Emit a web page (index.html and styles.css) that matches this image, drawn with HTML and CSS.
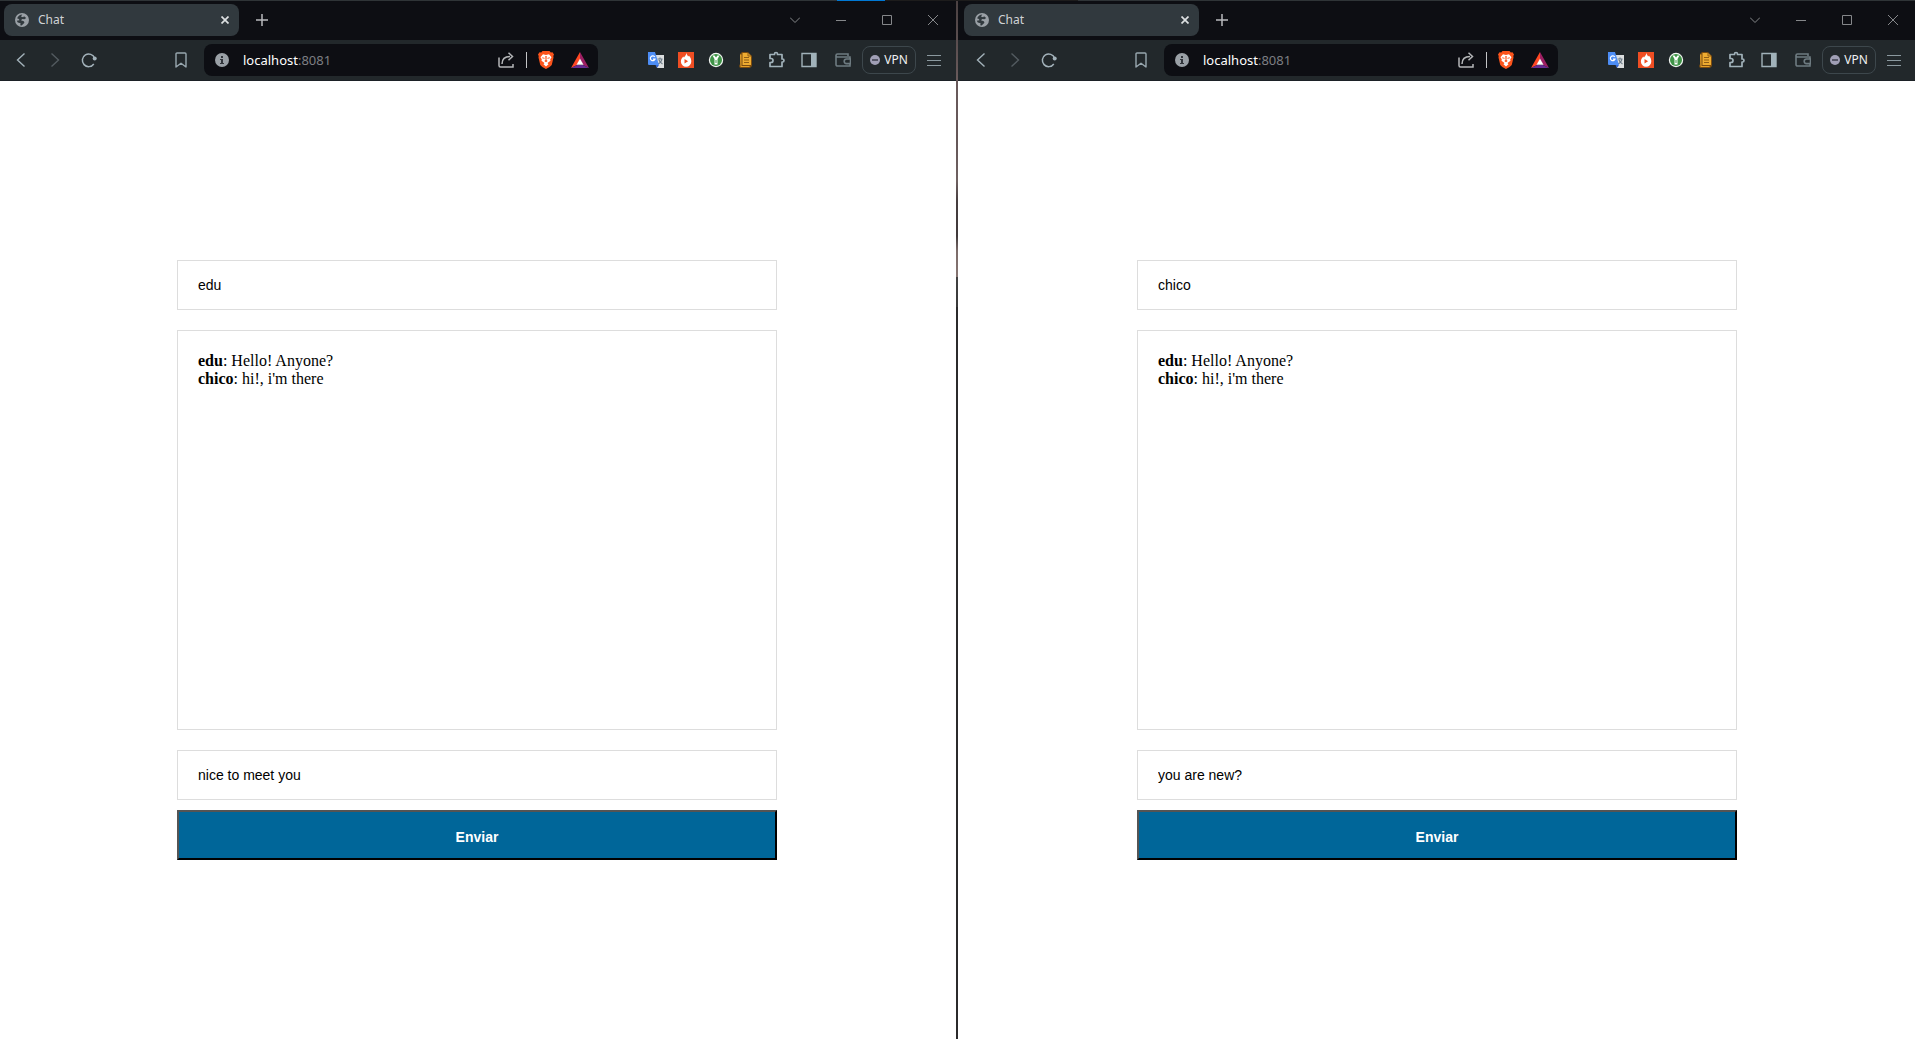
FILE: index.html
```html
<!DOCTYPE html>
<html lang="en">
<head>
<meta charset="utf-8">
<meta name="viewport" content="width=device-width, initial-scale=1">
<title>Chat</title>
<link rel="stylesheet" href="styles.css">
</head>
<body>
<svg class="sprite" aria-hidden="true">
  <symbol id="globe" viewBox="2 2 20 20"><path d="M12 2C6.480 2 2 6.480 2 12s4.480 10 10 10 10-4.480 10-10S17.520 2 12 2zm-1 17.930c-3.950-.49-7-3.850-7-7.930 0-.62.08-1.210.21-1.790L9 15v1c0 1.100.9 2 2 2v1.930zm6.900-2.540c-.26-.81-1-1.390-1.900-1.390h-1v-3c0-.55-.45-1-1-1H8v-2h2c.55 0 1-.45 1-1V7h2c1.100 0 2-.9 2-2v-.41c2.930 1.190 5 4.060 5 7.410 0 2.080-.8 3.970-2.100 5.390z" fill="#31393e"/><path d="M12 2a10 10 0 1 0 0 20 10 10 0 0 0 0-20zM5 9.500C6.500 6.500 9 4.500 12.500 4.300L10.500 7l3 1.200 1.500-1.500 3 2.300-2.500 2-3-.3-2 1.500 4 1.600c1.500 1.200 1 2.800-.5 3.500l-2.500 2.700-2-.5.500-3-4-1-1.500-2.500 4-.5-1-2z" fill="#9aa0a6" fill-rule="evenodd"/></symbol>
  <symbol id="tab-close" viewBox="0 0 8 8"><path d="M.5.5l7 7M7.500.5l-7 7" stroke="#dde0e2" stroke-width="1.700"/></symbol>
  <symbol id="plus" viewBox="0 0 12 12"><path d="M6 0v12M0 6h12" stroke="#b9bbbe" stroke-width="1.500"/></symbol>
  <symbol id="chevron" viewBox="0 0 10 10"><path d="M0 2.500l5 5 5-5" fill="none" stroke="#85878a"/></symbol>
  <symbol id="minimize" viewBox="0 0 10 10"><path d="M0 5.500h10" stroke="#85878a"/></symbol>
  <symbol id="maximize" viewBox="0 0 10 10"><path d="M.5.5h9v9h-9z" fill="none" stroke="#85878a"/></symbol>
  <symbol id="close" viewBox="0 0 10 10"><path d="M0 0l10 10M10 0L0 10" stroke="#85878a"/></symbol>
  <symbol id="back" viewBox="0 0 16 16"><path d="M11.500 1.500L4.500 8l7 6.500" fill="none" stroke="#a3b2ba" stroke-width="1.400"/></symbol>
  <symbol id="forward" viewBox="0 0 16 16"><path d="M4.500 1.500l7 6.500-7 6.500" fill="none" stroke="#535b60" stroke-width="1.400"/></symbol>
  <symbol id="reload" viewBox="0 0 16 16"><path d="M13.600 6.200A6.300 6.300 0 1 0 12.800 12" fill="none" stroke="#a3b2ba" stroke-width="1.500"/><circle cx="13.700" cy="6.500" r="2" fill="#a3b2ba"/></symbol>
  <symbol id="bookmark" viewBox="0 0 16 16"><path d="M3 2a1 1 0 0 1 1-1h8a1 1 0 0 1 1 1v13l-5-3.800L3 15z" fill="none" stroke="#98a7af" stroke-width="1.400" stroke-linejoin="round"/></symbol>
  <symbol id="info" viewBox="0 0 14 14"><circle cx="7" cy="7" r="7" fill="#9aa0a6"/><path d="M6 3h2v2H6zM5 6h3v4h1v1H5v-1h1V7H5z" fill="#30343a"/></symbol>
  <symbol id="share" viewBox="0 0 16 16"><path d="M1 5.500v8a1.500 1.500 0 0 0 1.500 1.500h12.500v-3M4 12c0-5.500 3-7.500 8-7.500M10.500.800l4 3.700-4 3.700" fill="none" stroke="#b5b7b9" stroke-width="1.500"/></symbol>
  <symbol id="lion" viewBox="0 0 16 18"><path d="M4.500 0h7l1.300 1.500 1.700-.2 1.500 2.200-.7 1.500.2 1.500-1.700 7.300c-.3 1-4.600 4-5.800 4.200-1.200-.2-5.500-3.200-5.800-4.200L.5 6.500.7 5 0 3.500l1.500-2.200 1.700.2z" fill="#fb541c"/><path d="M5 3.300l3 .6 3-.6 2.500 3-1.300 2 .3 1.400-3 2.300 1 1.200L8 15.500l-2.500-2.300 1-1.200-3-2.300.3-1.400-1.300-2z" fill="#fff"/><path d="M4.200 6.200l2.600.8-.5.700-2-.4zM11.800 6.200l-2.600.8.500.7 2-.4zM7.300 5h1.400l-.2 4 1.200 1L8 11.200 6.300 10l1.200-1z" fill="#fb541c"/></symbol>
  <symbol id="triangle" viewBox="0 0 18 16"><path d="M9 0L0 16l6-3 3-6z" fill="#ff4724"/><path d="M9 0l9 16-6-3-3-6z" fill="#9e1f63"/><path d="M0 16h18l-6-3H6z" fill="#662d91"/><path d="M9 6.500l3.500 6.200h-7z" fill="#fff"/></symbol>
  <symbol id="translate" viewBox="0 0 16 16"><path d="M7 3h9v13H9z" fill="#dcdedf"/><path d="M9.500 7h5M12 5.500V7m2 0c-.5 2.500-2 4-4 5m1-4c.6 1.700 2 3 3.500 4" fill="none" stroke="#6b7a86" stroke-width="1.100"/><path d="M0 0h7l4 13H1a1 1 0 0 1-1-1z" fill="#4d8df5"/><path d="M7.500 13H11l-2 3z" fill="#3367d6"/><path d="M6.800 5A2.400 2.400 0 1 0 7 7.200H5" fill="none" stroke="#fff" stroke-width="1.200"/></symbol>
  <symbol id="flame" viewBox="0 0 16 16"><path d="M0 0h16v16H0z" fill="#f04e23"/><path d="M8.500.8c.1 1.800 1 2.500 1.500 3.700l1-.8c1.500 1.500 2.300 3.500 2.300 5.800a5.200 5.200 0 0 1-10.400 0c0-2 1-3.500 2.300-5l.8 1C6.800 4.300 8.300 3 8.500.8z" fill="#fff"/><path d="M6.500 7l3.600 2.300-3.600 2.300z" fill="#f04e23"/></symbol>
  <symbol id="key" viewBox="0 0 16 16"><circle cx="8" cy="8" r="7.200" fill="#f3f6f2"/><circle cx="8" cy="8" r="6" fill="#3f9447"/><path d="M4.500 3.500h2L8 5.500l1.500-2h2L9.500 7v5.500h-3V7z" fill="#fff"/><path d="M8 8v3" stroke="#3f9447"/></symbol>
  <symbol id="scroll" viewBox="0 0 16 16"><path d="M4 0h6l4 4v10l-2 2H2l-1-2 1-2V2z" fill="#7b4c10"/><path d="M4.500 1H10l3 3v9H4.500z" fill="#efac31"/><path d="M2 2.500h1.500V14H12l-.8 1H2.500z" fill="#e5a028"/><path d="M10 1v3h3M6 5.500h5M6 8h5M6 10.500h5" fill="none" stroke="#8f5e18"/></symbol>
  <symbol id="puzzle" viewBox="0 0 18 18"><path d="M2 3.500h4.500V3a1.500 1.500 0 0 1 3 0v.5H14V8h.5a1.500 1.500 0 0 1 0 3H14v4.500H2v-4h1a2 2 0 0 0 0-4H2z" fill="none" stroke="#a1b2ba" stroke-width="1.700" stroke-linejoin="round"/></symbol>
  <symbol id="panel" viewBox="0 0 16 16"><path d="M1 1.500h14v13H1z" fill="none" stroke="#a1b2ba" stroke-width="1.400"/><path d="M10 1.500h5v13h-5z" fill="#a1b2ba"/></symbol>
  <symbol id="wallet" viewBox="0 0 16 16"><path d="M13 4V2H2.500a1.500 1.500 0 0 0 0 3H15v2M1 3v9.500A1.500 1.500 0 0 0 2.500 14H15v-2.500M15.500 7h-4a2.300 2.300 0 0 0 0 4.600h4z" fill="none" stroke="#6e7b81" stroke-width="1.600"/></symbol>
  <symbol id="vpn-dot" viewBox="0 0 10 10"><circle cx="5" cy="5" r="5" fill="#a09fb5"/><path d="M2 5h6" stroke="#353744" stroke-width="1.400"/></symbol>
  <symbol id="menu" viewBox="0 0 14 12"><path d="M0 1.500h14M0 6.500h14M0 11.500h14" stroke="#8b999f"/></symbol>
</svg>

<div class="screen-edge"><span class="edge-a"></span><span class="edge-b"></span><span class="edge-c"></span><span class="edge-a"></span></div>
<div class="desktop">
  <section class="window window-left">
    <header class="titlebar">
      <div class="tab"><svg class="i14"><use href="#globe"/></svg><span class="tab-title">Chat</span><button class="tab-close" aria-label="Close tab"><svg class="i8"><use href="#tab-close"/></svg></button></div>
      <button class="new-tab" aria-label="New tab"><svg class="i12"><use href="#plus"/></svg></button>
      <div class="controls">
        <button aria-label="Search tabs"><svg class="i10"><use href="#chevron"/></svg></button>
        <button aria-label="Minimize"><svg class="i10"><use href="#minimize"/></svg></button>
        <button aria-label="Maximize"><svg class="i10"><use href="#maximize"/></svg></button>
        <button aria-label="Close"><svg class="i10"><use href="#close"/></svg></button>
      </div>
    </header>
    <nav class="toolbar">
      <button class="nav-button" aria-label="Back"><svg class="i16"><use href="#back"/></svg></button>
      <button class="nav-button" aria-label="Forward"><svg class="i16"><use href="#forward"/></svg></button>
      <button class="nav-button" aria-label="Reload"><svg class="i16"><use href="#reload"/></svg></button>
      <button class="nav-button bookmark" aria-label="Bookmark"><svg class="i16"><use href="#bookmark"/></svg></button>
      <div class="address">
        <svg class="i14"><use href="#info"/></svg>
        <div class="url" role="textbox" contenteditable="true" spellcheck="false" aria-label="Address">localhost<span class="port">:8081</span></div>
        <button aria-label="Share"><svg class="i16"><use href="#share"/></svg></button>
        <span class="separator"></span>
        <button class="shield" aria-label="Shields"><svg class="lion"><use href="#lion"/></svg></button>
        <button class="rewards" aria-label="Rewards"><svg class="triangle"><use href="#triangle"/></svg></button>
      </div>
      <div class="extensions">
        <button aria-label="Translate"><svg class="i16"><use href="#translate"/></svg></button>
        <button aria-label="Flame"><svg class="i16"><use href="#flame"/></svg></button>
        <button aria-label="Passwords"><svg class="i16"><use href="#key"/></svg></button>
        <button aria-label="Notes"><svg class="i16"><use href="#scroll"/></svg></button>
        <button class="wide" aria-label="Extensions"><svg class="i18"><use href="#puzzle"/></svg></button>
        <button class="wide" aria-label="Side panel"><svg class="i16"><use href="#panel"/></svg></button>
        <button class="wallet" aria-label="Wallet"><svg class="i16"><use href="#wallet"/></svg></button>
      </div>
      <button class="vpn"><svg class="i10"><use href="#vpn-dot"/></svg>VPN</button>
      <button class="menu" aria-label="Menu"><svg class="menu-icon"><use href="#menu"/></svg></button>
    </nav>
    <main class="page">
      <form class="chat">
        <input class="field" type="text" aria-label="Name" value="edu">
        <div class="messages"><div><strong>edu</strong>: Hello! Anyone?</div><div><strong>chico</strong>: hi!, i'm there</div></div>
        <input class="field" type="text" aria-label="Message" value="nice to meet you">
        <button class="send" type="button">Enviar</button>
      </form>
    </main>
  </section>
  <div class="divider"></div>
  <section class="window window-right">
    <header class="titlebar">
      <div class="tab"><svg class="i14"><use href="#globe"/></svg><span class="tab-title">Chat</span><button class="tab-close" aria-label="Close tab"><svg class="i8"><use href="#tab-close"/></svg></button></div>
      <button class="new-tab" aria-label="New tab"><svg class="i12"><use href="#plus"/></svg></button>
      <div class="controls">
        <button aria-label="Search tabs"><svg class="i10"><use href="#chevron"/></svg></button>
        <button aria-label="Minimize"><svg class="i10"><use href="#minimize"/></svg></button>
        <button aria-label="Maximize"><svg class="i10"><use href="#maximize"/></svg></button>
        <button aria-label="Close"><svg class="i10"><use href="#close"/></svg></button>
      </div>
    </header>
    <nav class="toolbar">
      <button class="nav-button" aria-label="Back"><svg class="i16"><use href="#back"/></svg></button>
      <button class="nav-button" aria-label="Forward"><svg class="i16"><use href="#forward"/></svg></button>
      <button class="nav-button" aria-label="Reload"><svg class="i16"><use href="#reload"/></svg></button>
      <button class="nav-button bookmark" aria-label="Bookmark"><svg class="i16"><use href="#bookmark"/></svg></button>
      <div class="address">
        <svg class="i14"><use href="#info"/></svg>
        <div class="url" role="textbox" contenteditable="true" spellcheck="false" aria-label="Address">localhost<span class="port">:8081</span></div>
        <button aria-label="Share"><svg class="i16"><use href="#share"/></svg></button>
        <span class="separator"></span>
        <button class="shield" aria-label="Shields"><svg class="lion"><use href="#lion"/></svg></button>
        <button class="rewards" aria-label="Rewards"><svg class="triangle"><use href="#triangle"/></svg></button>
      </div>
      <div class="extensions">
        <button aria-label="Translate"><svg class="i16"><use href="#translate"/></svg></button>
        <button aria-label="Flame"><svg class="i16"><use href="#flame"/></svg></button>
        <button aria-label="Passwords"><svg class="i16"><use href="#key"/></svg></button>
        <button aria-label="Notes"><svg class="i16"><use href="#scroll"/></svg></button>
        <button class="wide" aria-label="Extensions"><svg class="i18"><use href="#puzzle"/></svg></button>
        <button class="wide" aria-label="Side panel"><svg class="i16"><use href="#panel"/></svg></button>
        <button class="wallet" aria-label="Wallet"><svg class="i16"><use href="#wallet"/></svg></button>
      </div>
      <button class="vpn"><svg class="i10"><use href="#vpn-dot"/></svg>VPN</button>
      <button class="menu" aria-label="Menu"><svg class="menu-icon"><use href="#menu"/></svg></button>
    </nav>
    <main class="page">
      <form class="chat">
        <input class="field" type="text" aria-label="Name" value="chico">
        <div class="messages"><div><strong>edu</strong>: Hello! Anyone?</div><div><strong>chico</strong>: hi!, i'm there</div></div>
        <input class="field" type="text" aria-label="Message" value="you are new?">
        <button class="send" type="button">Enviar</button>
      </form>
    </main>
  </section>
</div>
</body>
</html>
```
FILE: styles.css
```css
* { box-sizing: border-box; }
body {
  margin: 0;
  min-height: 100vh;
  display: flex;
  flex-direction: column;
  background: #fff;
}
.sprite { display: none; }
svg { display: block; flex: none; }
button { font: inherit; }

.i8 { width: 8px; height: 8px; }
.i10 { width: 10px; height: 10px; }
.i12 { width: 12px; height: 12px; }
.i14 { width: 14px; height: 14px; }
.i16 { width: 16px; height: 16px; }
.i18 { width: 18px; height: 18px; }
.lion { width: 16px; height: 18px; }
.triangle { width: 18px; height: 16px; }
.menu-icon { width: 14px; height: 12px; }

/* Strip of the window behind, along the top of the screen */
.screen-edge { display: flex; height: 1px; flex: none; }
.edge-a { flex: 837; background: #2f3437; }
.edge-b { flex: 48; background: #0078d4; }
.edge-c { flex: 193; background: #1d1c1c; }

.desktop {
  flex: 1;
  display: grid;
  grid-template-columns: minmax(0, 956fr) 2px minmax(0, 957fr);
}
.divider {
  background: linear-gradient(#4b4142, #695a5b 79px, #655758 140px, #6f6161 180px, #463e3f 200px, #40393a 235px, #7c6c6a 250px, #857471 276px, #414141 276px, #393939 306px, #2b2a2b 306px);
}

.window { display: flex; flex-direction: column; }
.window-left { --left: 0px; --right: 1px; }
.window-right { --left: 2px; --right: 0px; }

/* Tab strip */
.titlebar {
  display: flex;
  align-items: center;
  height: 39px;
  padding-bottom: 1px;
  padding-left: calc(var(--left) + 4px);
  padding-right: var(--right);
  background: #0d0e13;
  font: 12px/16px "Noto Sans", sans-serif;
}
.titlebar button, .toolbar button {
  display: flex;
  align-items: center;
  justify-content: center;
  padding: 0;
  border: 0;
  background: none;
}
.tab {
  display: flex;
  align-items: center;
  gap: 9px;
  width: 235px;
  height: 32px;
  padding: 0 6px 0 11px;
  border-radius: 8px;
  background: #31393e;
  color: #d0d3d5;
}
.tab-title { flex: 1; }
.tab-close { width: 16px; height: 16px; }
.new-tab { width: 28px; height: 28px; margin-left: 9px; }
.controls { display: flex; gap: 2px; margin-left: auto; }
.controls button { width: 44px; height: 32px; }

/* Navigation and address bar */
.toolbar {
  display: flex;
  align-items: center;
  height: 41px;
  padding-left: calc(var(--left) + 4px);
  padding-right: calc(var(--right) + 5px);
  border-bottom: 1px solid #1c2126;
  background: #22282b;
}
.nav-button { width: 34px; height: 32px; flex: none; }
.toolbar .bookmark { margin-left: 58px; }
.address {
  flex: 1;
  display: flex;
  align-items: center;
  height: 32px;
  margin-left: 6px;
  padding: 0 9px 0 11px;
  border-radius: 8px;
  background: #0d0e13;
}
.url {
  flex: 1;
  margin-left: 14px;
  outline: 0;
  color: #fff;
  font: 13px/20px "Noto Sans", sans-serif;
  white-space: nowrap;
}
.port { color: #7d7f83; }
.separator { width: 1px; height: 16px; margin: 0 11px 0 12px; background: #c3c4c6; }
.rewards { margin-left: 17px; }
.extensions { display: flex; margin: 0 1px 0 43px; }
.extensions button { width: 30px; height: 32px; }
.extensions .wide { width: 32px; }
.extensions .wallet { width: 36px; }
.toolbar .vpn {
  gap: 4px;
  width: 54px;
  height: 28px;
  border: 1px solid #3d474c;
  border-radius: 8px;
  color: #f0f1f2;
  font: 12px/16px "Noto Sans", sans-serif;
}
.toolbar .menu { width: 32px; height: 32px; margin-left: 2px; }

/* Chat page */
.page {
  flex: 1;
  display: flex;
  align-items: center;
  justify-content: center;
  padding-left: var(--left);
  padding-right: calc(var(--right) + 1px);
}
.chat {
  display: flex;
  flex-direction: column;
  width: 100%;
  max-width: 600px;
}
.field {
  width: 100%;
  height: 50px;
  padding: 0 20px;
  border: 1px solid #ddd;
  border-radius: 0;
  background: #fff;
  color: #000;
  font: 14px "Liberation Sans", Arial, sans-serif;
}
.messages {
  min-height: 400px;
  margin: 20px 0;
  padding: 21px 20px;
  border: 1px solid #ddd;
  color: #000;
  font: 16px/18px "Liberation Serif", "Times New Roman", serif;
}
.send {
  height: 50px;
  margin-top: 10px;
  padding: 4px 0 0;
  border: 2px outset #000;
  background: #069;
  color: #fff;
  font: bold 14px "Liberation Sans", Arial, sans-serif;
}
```
